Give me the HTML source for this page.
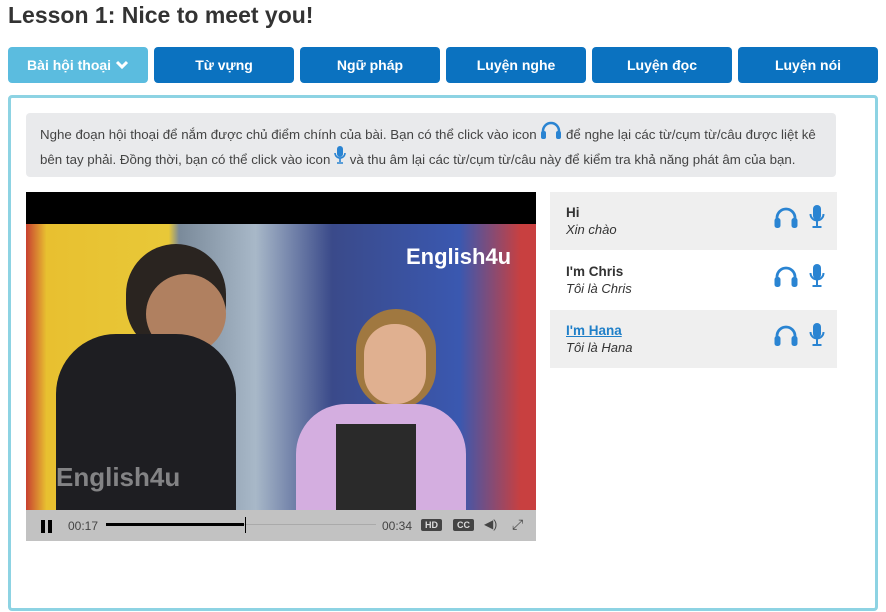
<!DOCTYPE html>
<html><head><meta charset="utf-8"><style>
*{box-sizing:border-box;margin:0;padding:0}
body{width:886px;height:612px;background:#fff;font-family:"Liberation Sans",sans-serif;position:relative;overflow:hidden}
h1{position:absolute;left:8px;top:2px;font-size:23px;font-weight:bold;color:#333}
.tab{position:absolute;top:47px;width:140px;height:36px;border-radius:4px;background:#0b72c0;color:#fff;font-weight:bold;font-size:14px;line-height:36px;text-align:center}
.box{position:absolute;left:8px;top:95px;width:870px;height:516px;border:3px solid #8dd3e3;border-radius:4px}
.info{position:absolute;left:26px;top:113px;width:810px;height:64px;background:#e9eaec;border-radius:4px;font-size:13.3px;color:#444;padding:8px 14px;line-height:23px;white-space:nowrap}
.row{position:absolute;left:550px;width:287px;height:58px;padding:13px 16px;font-size:13px;color:#333}
.row b{display:block;font-size:13.5px}
.row i{display:block;margin-top:2px}
</style></head><body>
<h1>Lesson 1: Nice to meet you!</h1>
<div class="tab" style="left:8px;background:#5bbcdf">Bài hội thoại <svg width="14" height="10" viewBox="0 0 14 10" style="vertical-align:0"><path d="M2 2l5 5 5-5" stroke="#fff" stroke-width="3" fill="none"/></svg></div>
<div class="tab" style="left:154px">Từ vựng</div>
<div class="tab" style="left:300px">Ngữ pháp</div>
<div class="tab" style="left:446px">Luyện nghe</div>
<div class="tab" style="left:592px">Luyện đọc</div>
<div class="tab" style="left:738px">Luyện nói</div>
<div class="box"></div>
<div class="info">Nghe đoạn hội thoại để nắm được chủ điểm chính của bài. Bạn có thể click vào icon <svg width="22" height="18" viewBox="0 0 22 18"><path d="M3 14V10a8 8 0 0116 0v4" stroke="#2a84d2" stroke-width="2.5" fill="none"/><rect x="1" y="10" width="5" height="8" rx="2" fill="#2a84d2"/><rect x="16" y="10" width="5" height="8" rx="2" fill="#2a84d2"/></svg> để nghe lại các từ/cụm từ/câu được liệt kê<br>bên tay phải. Đồng thời, bạn có thể click vào icon <svg width="12" height="18" viewBox="0 0 12 18"><rect x="3" y="0" width="6" height="11" rx="3" fill="#2a84d2"/><path d="M1 7a5 5 0 0010 0M6 12v4M3 17h6" stroke="#2a84d2" stroke-width="1.6" fill="none"/></svg> và thu âm lại các từ/cụm từ/câu này để kiểm tra khả năng phát âm của bạn.</div>
<div style="position:absolute;left:26px;top:192px;width:510px;height:32px;background:#000"></div>
<div style="position:absolute;left:26px;top:224px;width:510px;height:286px;overflow:hidden;background:linear-gradient(90deg,#c84030 0,#e8c030 4%,#e8c838 28%,#7a8a9a 30%,#a8b8c8 45%,#3a4a8a 60%,#3a58b0 85%,#c84040 97%)">
<div style="position:absolute;left:100px;top:20px;width:100px;height:110px;border-radius:50px;background:#2a2420"></div>
<div style="position:absolute;left:120px;top:50px;width:80px;height:80px;border-radius:40px;background:#b08060"></div>
<div style="position:absolute;left:30px;top:110px;width:180px;height:200px;border-radius:60px 60px 0 0;background:#1e1e22"></div>
<div style="position:absolute;left:330px;top:85px;width:80px;height:100px;border-radius:40px;background:#a07840"></div>
<div style="position:absolute;left:338px;top:100px;width:62px;height:80px;border-radius:30px;background:#e0b090"></div>
<div style="position:absolute;left:270px;top:180px;width:170px;height:120px;border-radius:50px 50px 0 0;background:#d4aee0"></div>
<div style="position:absolute;left:310px;top:200px;width:80px;height:90px;background:#2a2a2a"></div>
<div style="position:absolute;left:380px;top:20px;color:#fff;font-size:22px;font-weight:bold">English4u</div>
<div style="position:absolute;left:30px;top:238px;color:rgba(255,255,255,.45);font-size:26px;font-weight:bold">English4u</div>
</div>
<div style="position:absolute;left:26px;top:510px;width:510px;height:31px;background:#c2c2c2;font-size:12px;color:#444">
<div style="position:absolute;left:15px;top:10px;width:4px;height:13px;background:#000"></div>
<div style="position:absolute;left:22px;top:10px;width:4px;height:13px;background:#000"></div>
<span style="position:absolute;left:42px;top:9px">00:17</span>
<div style="position:absolute;left:80px;top:14px;width:270px;height:1px;background:#aaa"></div>
<div style="position:absolute;left:80px;top:13px;width:138px;height:3px;background:#000"></div>
<div style="position:absolute;left:219px;top:7px;width:1px;height:16px;background:#000"></div>
<span style="position:absolute;left:356px;top:9px">00:34</span>
<span style="position:absolute;left:395px;top:9px;background:#444;color:#ddd;font-size:9px;font-weight:bold;padding:1px 4px;border-radius:2px">HD</span>
<span style="position:absolute;left:427px;top:9px;background:#444;color:#ddd;font-size:9px;font-weight:bold;padding:1px 4px;border-radius:2px">CC</span>
<span style="position:absolute;left:458px;top:7px;font-size:12px">◀)</span>
<span style="position:absolute;left:486px;top:6px;font-size:14px">⤢</span>
</div>
<div class="row" style="top:192px;background:#efefef"><b>Hi</b><i>Xin chào</i></div>
<div class="row" style="top:251px"><b>I'm Chris</b><i>Tôi là Chris</i></div>
<div class="row" style="top:310px;background:#efefef"><b style="color:#1f7fc8;text-decoration:underline">I'm Hana</b><i>Tôi là Hana</i></div>
<svg width="0" height="0" style="position:absolute"><defs>
<g id="hp"><path d="M3 19V12a9 9 0 0118 0v7" stroke="#2a84d2" stroke-width="2.8" fill="none"/><rect x="0.5" y="12" width="6" height="10" rx="2.5" fill="#2a84d2"/><rect x="17.5" y="12" width="6" height="10" rx="2.5" fill="#2a84d2"/></g>
<g id="mc"><rect x="4" y="0" width="8" height="15" rx="4" fill="#2a84d2"/><path d="M1.5 9a6.5 6.5 0 0013 0M8 16v5M3.5 22h9" stroke="#2a84d2" stroke-width="2" fill="none"/></g>
</defs></svg>
<svg style="position:absolute;left:774px;top:206px" width="26" height="24"><use href="#hp"/></svg>
<svg style="position:absolute;left:809px;top:205px" width="16" height="24"><use href="#mc"/></svg>
<svg style="position:absolute;left:774px;top:265px" width="26" height="24"><use href="#hp"/></svg>
<svg style="position:absolute;left:809px;top:264px" width="16" height="24"><use href="#mc"/></svg>
<svg style="position:absolute;left:774px;top:324px" width="26" height="24"><use href="#hp"/></svg>
<svg style="position:absolute;left:809px;top:323px" width="16" height="24"><use href="#mc"/></svg>
</body></html>
